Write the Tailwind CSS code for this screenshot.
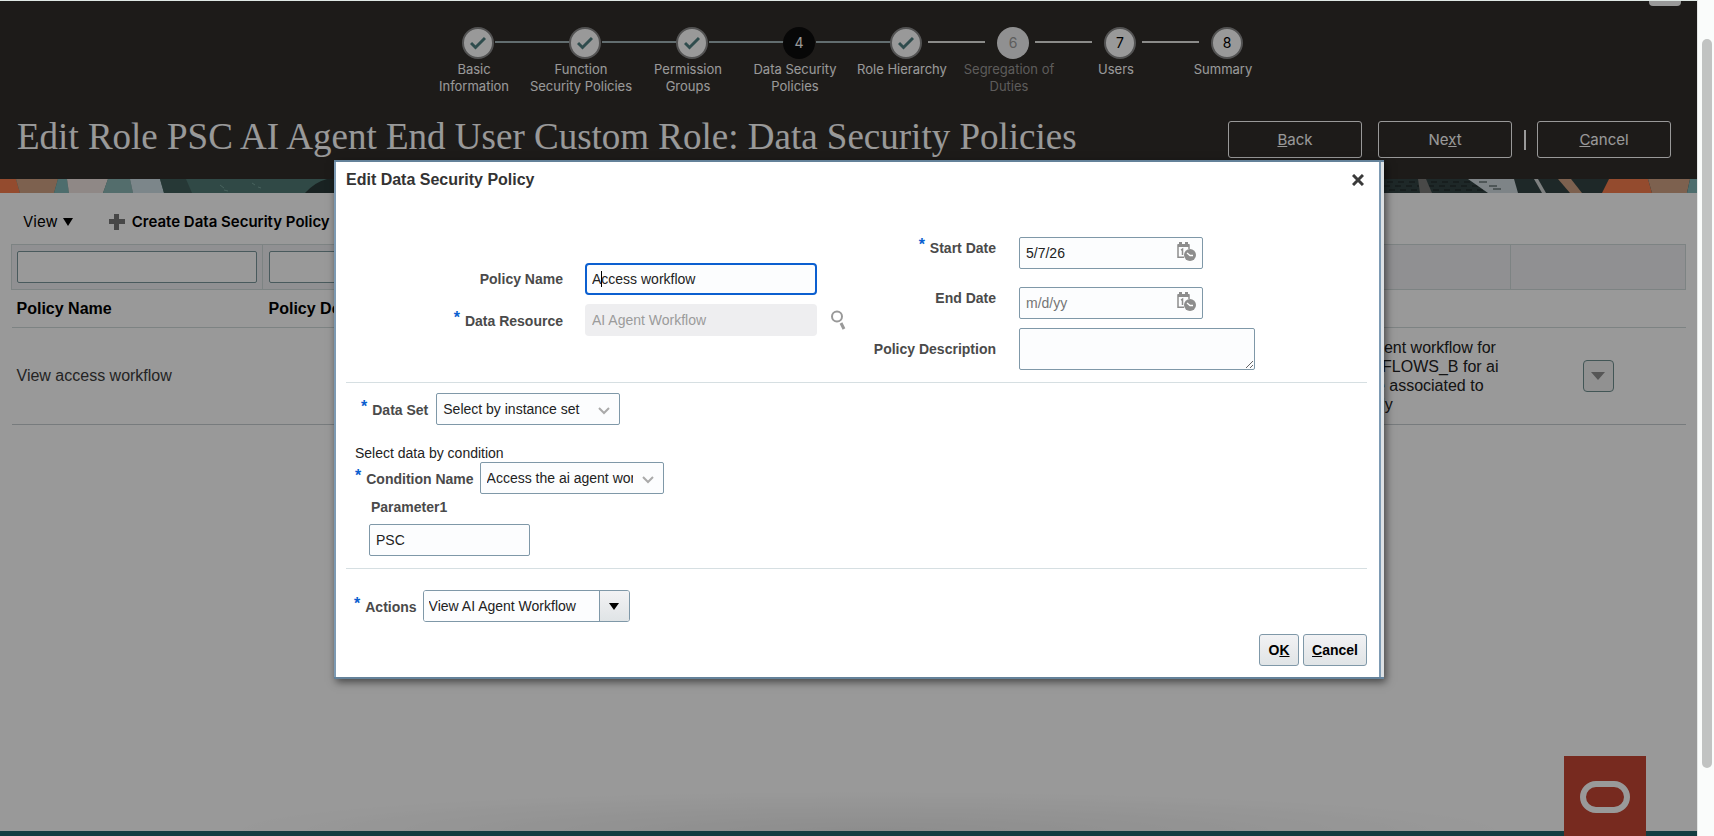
<!DOCTYPE html>
<html lang="en">

<head>
    <meta charset="UTF-8">
    <meta name="viewport" content="width=device-width, initial-scale=1.0">
    <title>Edit Role: Data Security Policies</title>
    <script src="https://cdn.jsdelivr.net/npm/@tailwindcss/browser@4"></script>
</head>

<body class="h-screen overflow-hidden flex bg-white font-['Liberation_Sans',Arial,sans-serif] text-sm text-[#222]">

    <div class="relative flex-1 min-w-0 flex flex-col overflow-hidden border-t border-[#dfe8e4]">

        <!-- Header -->
        <header class="relative h-[178px] shrink-0 bg-[#312d2a] text-white">
            <div class="absolute right-4 top-0 w-8 h-[5px] rounded-b bg-white"></div>

            <ol class="flex justify-center pt-[26px] font-[Inter,sans-serif] text-[13px] leading-[17px] text-center">
                <li class="relative w-[107px]">
                    <div class="relative z-10 w-8 h-8 mx-auto left-1 rounded-full border-2 border-[#8a8a8a] bg-white flex items-center justify-center">
                        <svg class="w-4 h-4" viewBox="0 0 16 16" fill="none" stroke="#4f7f80" stroke-width="3"><path d="M1 8l4.500 4.500L15 3" /></svg>
                    </div>
                    <div class="absolute left-[74px] top-[14px] w-[75px] h-0.5 bg-[#a3b6b9]"></div>
                    <p class="mt-[2px]">Basic<br>Information</p>
                </li>
                <li class="relative w-[107px]">
                    <div class="relative z-10 w-8 h-8 mx-auto left-1 rounded-full border-2 border-[#8a8a8a] bg-white flex items-center justify-center">
                        <svg class="w-4 h-4" viewBox="0 0 16 16" fill="none" stroke="#4f7f80" stroke-width="3"><path d="M1 8l4.500 4.500L15 3" /></svg>
                    </div>
                    <div class="absolute left-[74px] top-[14px] w-[75px] h-0.5 bg-[#a3b6b9]"></div>
                    <p class="mt-[2px]">Function<br>Security Policies</p>
                </li>
                <li class="relative w-[107px]">
                    <div class="relative z-10 w-8 h-8 mx-auto left-1 rounded-full border-2 border-[#8a8a8a] bg-white flex items-center justify-center">
                        <svg class="w-4 h-4" viewBox="0 0 16 16" fill="none" stroke="#4f7f80" stroke-width="3"><path d="M1 8l4.500 4.500L15 3" /></svg>
                    </div>
                    <div class="absolute left-[74px] top-[14px] w-[75px] h-0.5 bg-[#a3b6b9]"></div>
                    <p class="mt-[2px]">Permission<br>Groups</p>
                </li>
                <li class="relative w-[107px]">
                    <div class="relative z-10 w-8 h-8 mx-auto left-1 rounded-full bg-[#0d0c0c] flex items-center justify-center text-sm">4</div>
                    <div class="absolute left-[74px] top-[14px] w-[75px] h-0.5 bg-[#a3b6b9]"></div>
                    <p class="mt-[2px]">Data Security<br>Policies</p>
                </li>
                <li class="relative w-[107px]">
                    <div class="relative z-10 w-8 h-8 mx-auto left-1 rounded-full border-2 border-[#8a8a8a] bg-white flex items-center justify-center">
                        <svg class="w-4 h-4" viewBox="0 0 16 16" fill="none" stroke="#4f7f80" stroke-width="3"><path d="M1 8l4.500 4.500L15 3" /></svg>
                    </div>
                    <div class="absolute left-[79px] top-[14px] w-[57px] h-0.5 bg-[#e8e8e4]"></div>
                    <p class="mt-[2px]">Role Hierarchy</p>
                </li>
                <li class="relative w-[107px]">
                    <div class="relative z-10 w-8 h-8 mx-auto left-1 rounded-full bg-[#f1f1f2] flex items-center justify-center text-sm text-[#9c9c9c]">6</div>
                    <div class="absolute left-[79px] top-[14px] w-[57px] h-0.5 bg-[#e8e8e4]"></div>
                    <p class="mt-[2px] text-[#9c9a98]">Segregation of<br>Duties</p>
                </li>
                <li class="relative w-[107px]">
                    <div class="relative z-10 w-8 h-8 mx-auto left-1 rounded-full border-2 border-[#8a8a8a] bg-white flex items-center justify-center text-sm text-black">7</div>
                    <div class="absolute left-[79px] top-[14px] w-[57px] h-0.5 bg-[#e8e8e4]"></div>
                    <p class="mt-[2px]">Users</p>
                </li>
                <li class="relative w-[107px]">
                    <div class="relative z-10 w-8 h-8 mx-auto left-1 rounded-full border-2 border-[#8a8a8a] bg-white flex items-center justify-center text-sm text-black">8</div>
                    <p class="mt-[2px]">Summary</p>
                </li>
            </ol>

            <div class="absolute inset-x-0 top-[110px] pl-[17px] pr-[26px] flex items-center justify-between">
                <h1 class="font-['Liberation_Serif',Georgia,serif] text-[37px] leading-[52px] whitespace-nowrap">Edit Role PSC AI Agent End User Custom Role: Data Security Policies</h1>
                <div class="flex items-center font-[Inter,sans-serif] text-[15px] pt-[5px]">
                    <button class="w-[134px] h-[37px] rounded-[3px] border border-white"><u>B</u>ack</button>
                    <button class="w-[134px] h-[37px] rounded-[3px] border border-white ml-4">Ne<u>x</u>t</button>
                    <span class="w-0.5 h-5 bg-white ml-3 mr-[11px]"></span>
                    <button class="w-[134px] h-[37px] rounded-[3px] border border-white"><u>C</u>ancel</button>
                </div>
            </div>
        </header>

        <!-- Pattern strip -->
        <div class="h-[14px] shrink-0 flex justify-between bg-[#324343]">
            <svg class="w-[334px] h-[14px]" viewBox="0 0 334 14">
                <path fill="#507b75" d="M0 0h334v14H0z" />
                <path fill="#f77d4e" d="M0 0h16l4 14H0z" />
                <path fill="#d0a284" d="M16 0h42l-4 14H20z" />
                <path fill="#80b6b6" d="M58 0h9l2 14H54z" />
                <path fill="#efe3df" d="M67 0h41l-5 14H69z" />
                <path fill="#8bb6b4" d="M108 0h22l3 14h-30z" />
                <path fill="#cfdfe6" d="M130 0h30l4 14h-31z" />
                <path fill="#405e5b" d="M160 0h26l6 14h-28z" />
                <path fill="#2b3a3a" d="M305 14q10-11 22-14h7v14z" />
                <path stroke="#79a49d" stroke-width="1" d="M220 6l4 3m0 2l4 1m24-8l3 2m3 2l3 1" />
            </svg>
            <svg class="w-[313px] h-[14px]" viewBox="0 0 313 14">
                <path fill="#324343" d="M0 0h313v14H0z" />
                <path stroke="#1d2525" stroke-width="1" stroke-dasharray="6 5" d="M3 3h90M0 7h96M5 11h100M90 3h20" />
                <path fill="#7a7a78" d="M34 0h8l6 14H36z" />
                <path fill="#d2dde2" d="M84 0h46l4 14h-30z" />
                <path stroke="#324343" stroke-width="1" d="M95 3h8m2 4h8m-4 3h8" />
                <path fill="#d2d6d6" d="M150 0h4l8 14h-4z" />
                <path fill="#d0a284" d="M174 0h13l11 14h-12z" />
                <path fill="#f77d4e" d="M225 0h39l4 14h-50z" />
                <path fill="#d0a284" d="M264 0h42l-3 14h-35z" />
                <path fill="#80b6b6" d="M306 0h7v14h-10z" />
            </svg>
        </div>

        <main class="flex-1 px-[11px] bg-white text-base">
            <div class="flex items-center h-[51px] pt-[7px] pl-3 font-[Inter,sans-serif] text-[15px] text-black">
                <button class="flex items-center gap-[5px]">View
                    <svg class="w-[10px] h-2" viewBox="0 0 10 8"><path d="M0 0h10L5 8z" /></svg>
                </button>
                <button class="flex items-center gap-[7px] ml-9 font-semibold whitespace-nowrap">
                    <svg class="w-4 h-4" viewBox="0 0 16 16" fill="#777"><path d="M5 0h5v5h6v5h-6v6H5v-6H0V5h5z" /></svg>
                    Create Data Security Policy
                </button>
            </div>

            <table class="w-full table-fixed border-collapse">
                <colgroup>
                    <col class="w-[251px]">
                    <col>
                    <col class="w-[244px]">
                    <col class="w-[175px]">
                </colgroup>
                <thead>
                    <tr class="h-[45px] bg-[#f1f1f4] border border-[#d0dadb]">
                        <td class="px-[5px]"><input aria-label="Filter Policy Name" class="block w-[240px] h-8 rounded-[2px] border border-[#7b979b] bg-white"></td>
                        <td class="px-[6px] border-l border-[#d0dadb]"><input aria-label="Filter Policy Description" class="block w-[240px] h-8 rounded-[2px] border border-[#7b979b] bg-white"></td>
                        <td></td>
                        <td class="border-l border-[#d0dadb]"></td>
                    </tr>
                    <tr class="h-[38px] border-b border-[#d0dadb] text-left text-black">
                        <th class="px-[5px]">Policy Name</th>
                        <th class="px-[6px]">Policy Description</th>
                        <th></th>
                        <th></th>
                    </tr>
                </thead>
                <tbody>
                    <tr class="h-[97px] border-b border-[#c6cdd0]">
                        <td class="px-[5px] text-[#3c3c3c]">View access workflow</td>
                        <td></td>
                        <td class="leading-[19px] whitespace-nowrap">Access the ai agent workflow for<br>on HRC_WORKFLOWS_B for ai<br>agents that were associated to<br>the product family</td>
                        <td class="text-center">
                            <button aria-label="Row actions" class="w-[31px] h-8 rounded border border-[#6f8f90] bg-[#f2f2f2] inline-flex items-center justify-center align-middle">
                                <svg class="w-[14px] h-2" viewBox="0 0 14 8" fill="#8f8f8f"><path d="M0 0h14L7 8z" /></svg>
                            </button>
                        </td>
                    </tr>
                </tbody>
            </table>
        </main>

        <!-- Footer -->
        <div class="absolute left-[220px] right-[180px] bottom-[5px] h-10 bg-[radial-gradient(ellipse_at_bottom,rgba(0,0,0,0.08),transparent_70%)]"></div>
        <footer class="h-[5px] shrink-0 bg-[#21646b]"></footer>
        <div class="absolute right-[51px] bottom-0 w-[82px] h-20 bg-[#c74634]">
            <svg class="mt-[25px] ml-4 w-[50px] h-8" viewBox="0 0 50 32" fill="none" stroke="#fff" stroke-width="6"><rect x="3" y="3" width="44" height="26" rx="13" /></svg>
        </div>

        <div class="absolute inset-0 z-20 bg-black/40"></div>

        <!-- Dialog -->
        <div role="dialog" aria-labelledby="dialog-title"
            class="absolute z-30 left-[334px] top-[159px] w-[1050px] pr-[3px] bg-[#dde1e4] border-t-2 border-b-2 border-[#64829a] shadow-[2px_3px_8px_rgba(0,0,0,0.55)]">
            <div class="bg-white border-x-2 border-x-[#7d9ab3] pl-[10px] pr-3 pb-[11px]">
                <div class="flex items-center justify-between h-9 pr-0.5">
                    <h2 id="dialog-title" class="text-base font-bold text-[#333]">Edit Data Security Policy</h2>
                    <button aria-label="Close" class="p-px">
                        <svg class="w-3 h-3" viewBox="0 0 12 12" stroke="#3a3a3a" stroke-width="3"><path d="M1 1l10 10M11 1L1 11" /></svg>
                    </button>
                </div>

                <div class="flex items-start h-[185px] border-b border-[#d6dfe2]">
                    <div class="grid grid-cols-[217px_232px_16px] items-center gap-y-[9px] pt-[65px]">
                        <label for="policy-name" class="text-right font-bold text-[#4a4a4a]">Policy Name</label>
                        <div class="relative ml-[22px] w-[232px]">
                            <input id="policy-name" value="Access workflow" class="block w-full h-8 px-[5px] rounded border-2 border-[#0b5fd0] bg-[#fcfdfe]">
                            <span class="absolute left-4 top-2 w-px h-4 bg-black"></span>
                        </div>
                        <span></span>
                        <label for="data-resource" class="text-right font-bold text-[#4a4a4a]"><span class="text-base leading-none align-[3px] text-[#0b5fd0] mr-[5px]">*</span>Data Resource</label>
                        <div class="ml-[22px] w-[232px]">
                            <input id="data-resource" disabled value="AI Agent Workflow" class="block w-full h-8 px-[7px] rounded bg-[#eeeef0] text-[#9b9b9b]">
                        </div>
                        <button aria-label="Search" class="ml-9">
                            <svg class="w-4 h-5" viewBox="0 0 16 20" fill="none" stroke="#999"><circle cx="6" cy="6.500" r="5" stroke-width="2" /><path stroke-width="3" d="M10 13l3 6" /></svg>
                        </button>
                    </div>

                    <div class="grid grid-cols-[150px_236px] gap-x-[23px] ml-[35px] pt-[39px]">
                        <label for="start-date" class="leading-[22px] text-right font-bold text-[#4a4a4a]"><span class="text-base leading-none align-[3px] text-[#0b5fd0] mr-[5px]">*</span>Start Date</label>
                        <div class="relative w-[184px] h-[50px]">
                            <input id="start-date" value="5/7/26" class="block w-full h-8 px-[6px] rounded-[2px] border border-[#7f98a8] bg-[#fcfdfe]">
                            <button aria-label="Select start date" class="absolute right-[7px] top-[5px]">
                                <svg class="w-[19px] h-[19px]" viewBox="0 0 19 19" fill="none" stroke="#8d8d8d"><path stroke-width="1.500" d="M7 15.200H1V3h11v4" /><path stroke-width="3" d="M1 3.500h11M3.500 0v4M9.500 0v4" /><path stroke-width="1.500" d="M4 8.200l1.500-1V13" /><circle cx="13" cy="13" r="6" fill="#8d8d8d" stroke="none" /><path stroke="#fff" stroke-width="1.300" d="M10 11l3 2.500h3" /></svg>
                            </button>
                        </div>
                        <label for="end-date" class="leading-[22px] text-right font-bold text-[#4a4a4a]">End Date</label>
                        <div class="relative w-[184px] h-[41px]">
                            <input id="end-date" placeholder="m/d/yy" class="block w-full h-8 px-[6px] rounded-[2px] border border-[#7f98a8] bg-[#fcfdfe] placeholder:text-[#757575]">
                            <button aria-label="Select end date" class="absolute right-[7px] top-[5px]">
                                <svg class="w-[19px] h-[19px]" viewBox="0 0 19 19" fill="none" stroke="#8d8d8d"><path stroke-width="1.500" d="M7 15.200H1V3h11v4" /><path stroke-width="3" d="M1 3.500h11M3.500 0v4M9.500 0v4" /><path stroke-width="1.500" d="M4 8.200l1.500-1V13" /><circle cx="13" cy="13" r="6" fill="#8d8d8d" stroke="none" /><path stroke="#fff" stroke-width="1.300" d="M10 11l3 2.500h3" /></svg>
                            </button>
                        </div>
                        <label for="policy-description" class="self-center text-right font-bold text-[#4a4a4a]">Policy Description</label>
                        <textarea id="policy-description" class="block w-full h-[42px] rounded-[2px] border border-[#7f98a8] bg-[#fcfdfe]"></textarea>
                    </div>
                </div>

                <div class="border-b border-[#d6dfe2] pt-[10px] pb-3 pl-[9px]">
                    <div class="flex items-center pl-[6px]">
                        <label for="data-set" class="font-bold text-[#4a4a4a]"><span class="text-base leading-none align-[3px] text-[#0b5fd0] mr-[5px]">*</span>Data Set</label>
                        <div class="relative ml-2">
                            <select id="data-set" class="block appearance-none w-[184px] h-8 pl-[6px] pr-[30px] rounded-[2px] border border-[#7f98a8] bg-[#fcfdfe]">
                                <option>Select by instance set</option>
                            </select>
                            <svg class="absolute right-[10px] top-[14px] w-3 h-2 pointer-events-none" viewBox="0 0 12 8" fill="none" stroke="#aaa" stroke-width="2"><path d="M1 1l5 5 5-5" /></svg>
                        </div>
                    </div>
                    <p class="mt-[19px] leading-[18px]">Select data by condition</p>
                    <div class="flex items-center">
                        <label for="condition-name" class="font-bold text-[#4a4a4a]"><span class="text-base leading-none align-[3px] text-[#0b5fd0] mr-[5px]">*</span>Condition Name</label>
                        <div class="relative ml-[6px]">
                            <select id="condition-name" class="block appearance-none w-[184px] h-8 pl-[6px] pr-[30px] rounded-[2px] border border-[#7f98a8] bg-[#fcfdfe]">
                                <option>Access the ai agent workflow</option>
                            </select>
                            <svg class="absolute right-[10px] top-[14px] w-3 h-2 pointer-events-none" viewBox="0 0 12 8" fill="none" stroke="#aaa" stroke-width="2"><path d="M1 1l5 5 5-5" /></svg>
                        </div>
                    </div>
                    <label for="parameter1" class="block mt-1 ml-4 leading-[18px] font-bold text-[#4a4a4a]">Parameter1</label>
                    <input id="parameter1" value="PSC" class="block mt-2 ml-[14px] w-[161px] h-8 px-[6px] rounded-[2px] border border-[#7f98a8] bg-[#fcfdfe]">
                </div>

                <div class="flex items-center pl-2 pt-[21px]">
                    <label for="actions" class="font-bold text-[#4a4a4a]"><span class="text-base leading-none align-[3px] text-[#0b5fd0] mr-[5px]">*</span>Actions</label>
                    <div class="flex ml-[6px] w-[207px] h-8 rounded-[3px] border border-[#7f98a8] overflow-hidden">
                        <input id="actions" value="View AI Agent Workflow" class="w-[175px] px-[5px] bg-[#fcfdfe]">
                        <button aria-label="Open actions" class="flex-1 border-l border-[#7f98a8] bg-linear-to-b from-[#f2f2f4] to-[#e0e4e6] flex items-center justify-center">
                            <svg class="w-[10px] h-[7px]" viewBox="0 0 10 7"><path d="M0 0h10L5 7z" /></svg>
                        </button>
                    </div>
                </div>

                <div class="flex justify-end gap-1 mt-3">
                    <button class="w-10 h-8 rounded-[3px] border border-[#7f98a8] bg-linear-to-b from-[#f2f2f4] to-[#e0e4e6] font-bold text-black">O<u>K</u></button>
                    <button class="w-16 h-8 rounded-[3px] border border-[#7f98a8] bg-linear-to-b from-[#f2f2f4] to-[#e0e4e6] font-bold text-black"><u>C</u>ancel</button>
                </div>
            </div>
        </div>
    </div>

    <!-- Scrollbar -->
    <div class="w-[17px] shrink-0 border-l border-[#e4e6e5] bg-[#fafcfb] pt-[39px] pl-1">
        <div class="w-[10px] h-[729px] rounded-full bg-[#c1c3c2]"></div>
    </div>
</body>

</html>
